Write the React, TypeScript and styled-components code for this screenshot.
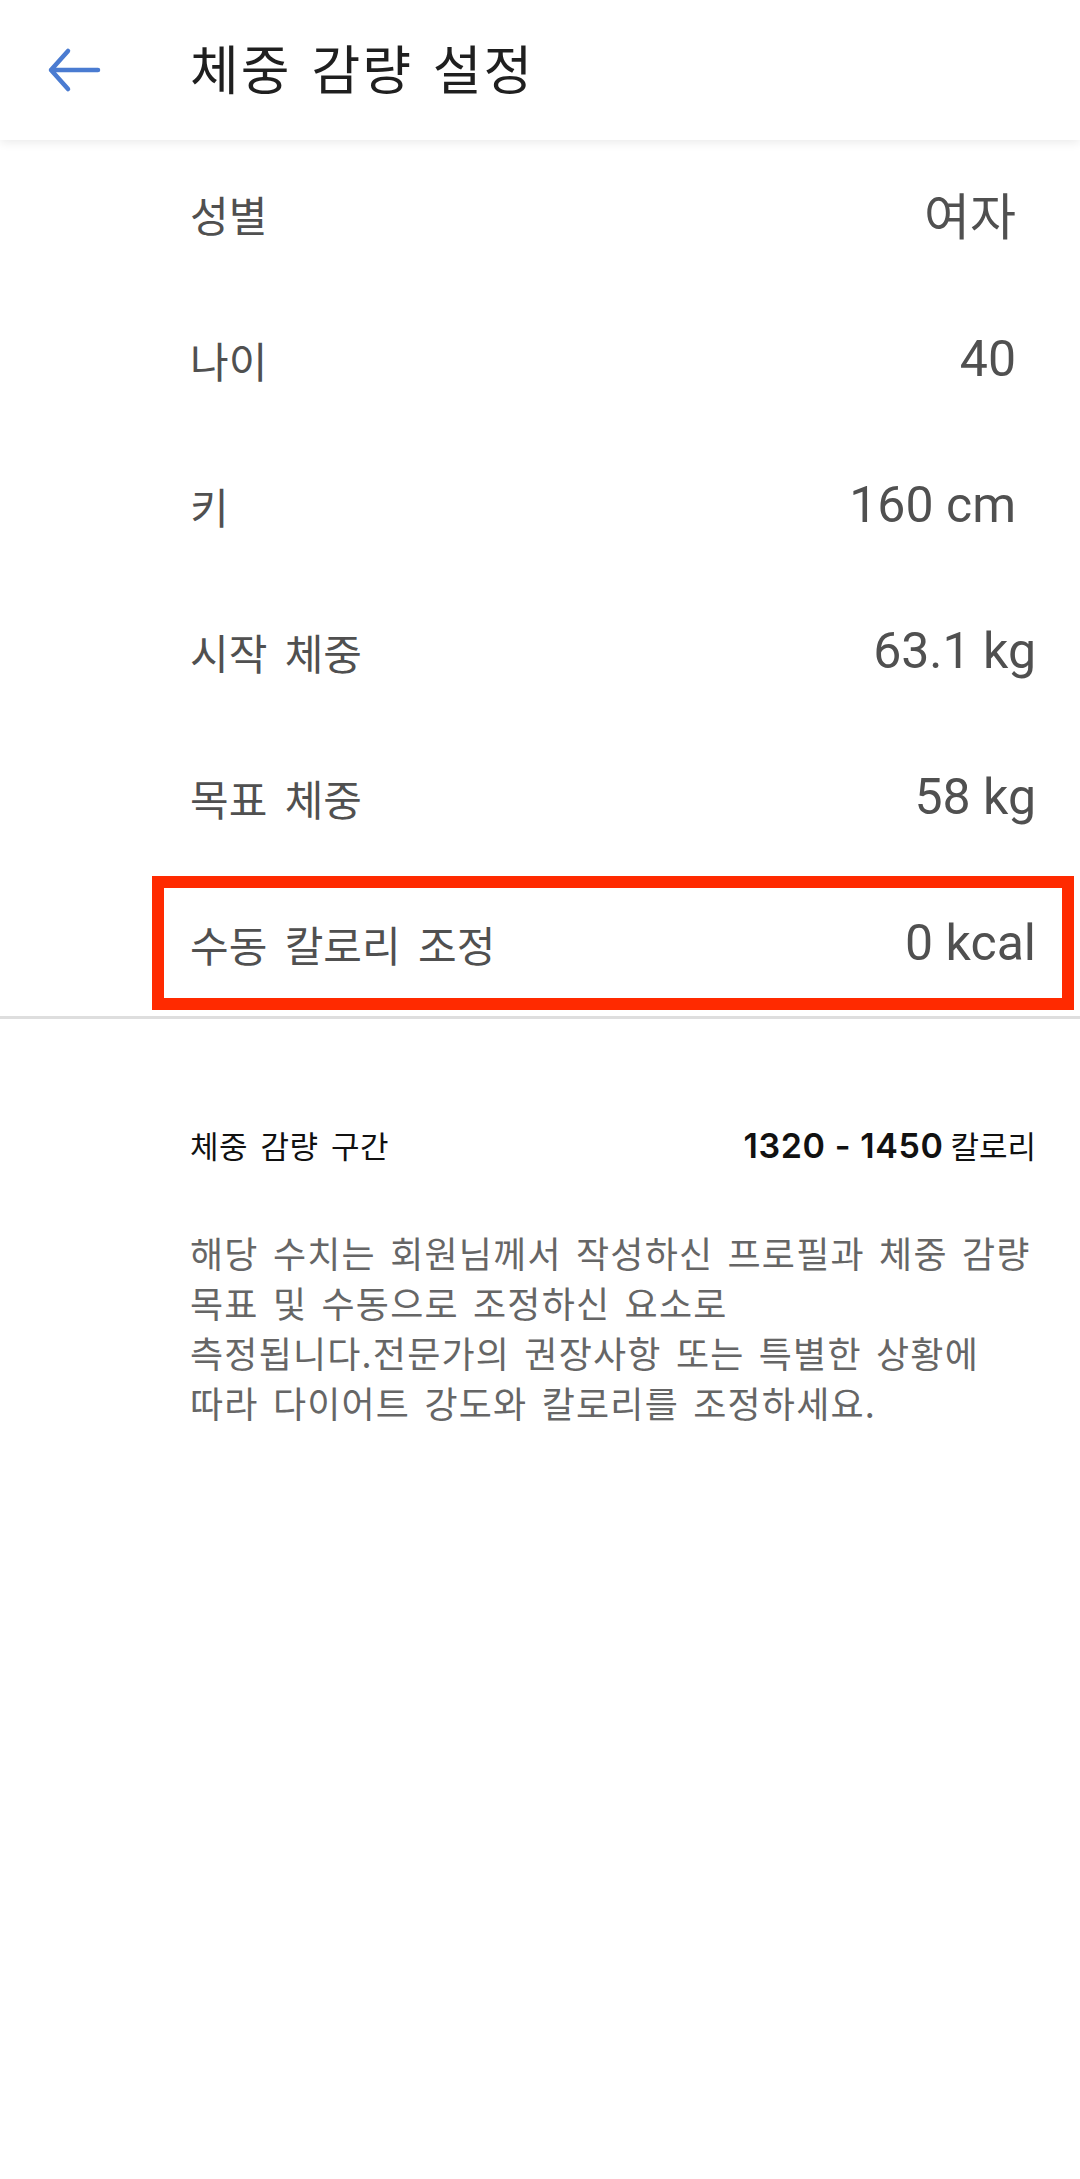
import styled, { createGlobalStyle } from "styled-components";

const GlobalStyle = createGlobalStyle`
  html, body {
    margin: 0;
    padding: 0;
    background: #ffffff;
  }
  body {
    font-family: "Noto Sans CJK KR", "Noto Sans", sans-serif;
  }
`;

const rows = [
    {label: "성별", value: "여자", inset: 64},
    {label: "나이", value: "40", inset: 64},
    {label: "키", value: "160 cm", inset: 64},
    {label: "시작 체중", value: "63.1 kg", inset: 44},
    {label: "목표 체중", value: "58 kg", inset: 44},
    {label: "수동 칼로리 조정", value: "0 kcal", inset: 44, marked: true},
];

export default function App() {
    return (
        <>
            <GlobalStyle/>
            <Page>
                <Header>
                    <BackButton aria-label="뒤로">
                        <svg width="56" height="48" viewBox="0 0 56 48" fill="none">
                            <path d="M20 2 L3 21 L20 40 M3 21 L50 21" stroke="#4a7bd1" strokeWidth="4.5"
                                  strokeLinecap="round" strokeLinejoin="round" transform="translate(1 3)"/>
                        </svg>
                    </BackButton>
                    <Title>체중 감량 설정</Title>
                </Header>
                <List>
                    {rows.map((r) => (
                        <Row key={r.label}>
                            <Label>{r.label}</Label>
                            <Value $inset={r.inset}>{r.value}</Value>
                            {r.marked && <Marker/>}
                        </Row>
                    ))}
                </List>
                <Summary>
                    <RangeRow>
                        <RangeLabel>체중 감량 구간</RangeLabel>
                        <RangeValue>
                            <Digits>1320 - 1450</Digits> 칼로리
                        </RangeValue>
                    </RangeRow>
                    <Note>
                        해당 수치는 회원님께서 작성하신 프로필과 체중 감량<br/>
                        목표 및 수동으로 조정하신 요소로<br/>
                        측정됩니다.전문가의 권장사항 또는 특별한 상황에<br/>
                        따라 다이어트 강도와 칼로리를 조정하세요.
                    </Note>
                </Summary>
            </Page>
        </>
    );
}

const Page = styled.div`
  width: 1080px;
  min-height: 2179px;
  background: #fff;
`
const Header = styled.header`
  height: 140px;
  display: flex;
  align-items: center;
  background: #fff;
  box-shadow: 0 2px 10px rgba(0, 0, 0, 0.09);
  position: relative;
  z-index: 1;
`
const BackButton = styled.button`
  width: 190px;
  height: 140px;
  padding: 0 0 0 47px;
  border: none;
  background: none;
  display: flex;
  align-items: center;
`
const Title = styled.h1`
  margin: 0;
  font-size: 53px;
  font-weight: 400;
  letter-spacing: 2px;
  word-spacing: 6px;
  color: #1f1f1f;
  line-height: 1;
  transform: translateY(-3px);
`
const List = styled.div`
  border-bottom: 3px solid #dedede;
`
const Row = styled.div`
  position: relative;
  height: 146px;
  display: flex;
  align-items: center;
  justify-content: space-between;
  padding-left: 190px;
`
const Label = styled.span`
  font-size: 42px;
  word-spacing: 8px;
  color: #505050;
`
const Value = styled.span<{ $inset: number }>`
  font-family: Roboto, "Noto Sans CJK KR", sans-serif;
  font-size: 50px;
  color: #505050;
  padding-right: ${(p) => p.$inset}px;
`
const Marker = styled.div`
  position: absolute;
  top: 6px;
  bottom: 6px;
  left: 152px;
  right: 6px;
  border: 12px solid #ff2a00;
  pointer-events: none;
`
const Summary = styled.section`
  padding: 100px 44px 0 190px;
`
const RangeRow = styled.div`
  height: 50px;
  display: flex;
  align-items: center;
  justify-content: space-between;
`
const RangeLabel = styled.span`
  font-size: 31px;
  letter-spacing: 0.5px;
  word-spacing: 5px;
  color: #111;
`
const RangeValue = styled.span`
  font-size: 31px;
  color: #111;
`
const Digits = styled.span`
  font-family: Inter, "Noto Sans", sans-serif;
  font-weight: 600;
  font-size: 34px;
  letter-spacing: 0.6px;
`
const Note = styled.p`
  margin: 58px 0 0;
  font-size: 36px;
  line-height: 50px;
  letter-spacing: 1.2px;
  word-spacing: 5px;
  color: #666;
`
